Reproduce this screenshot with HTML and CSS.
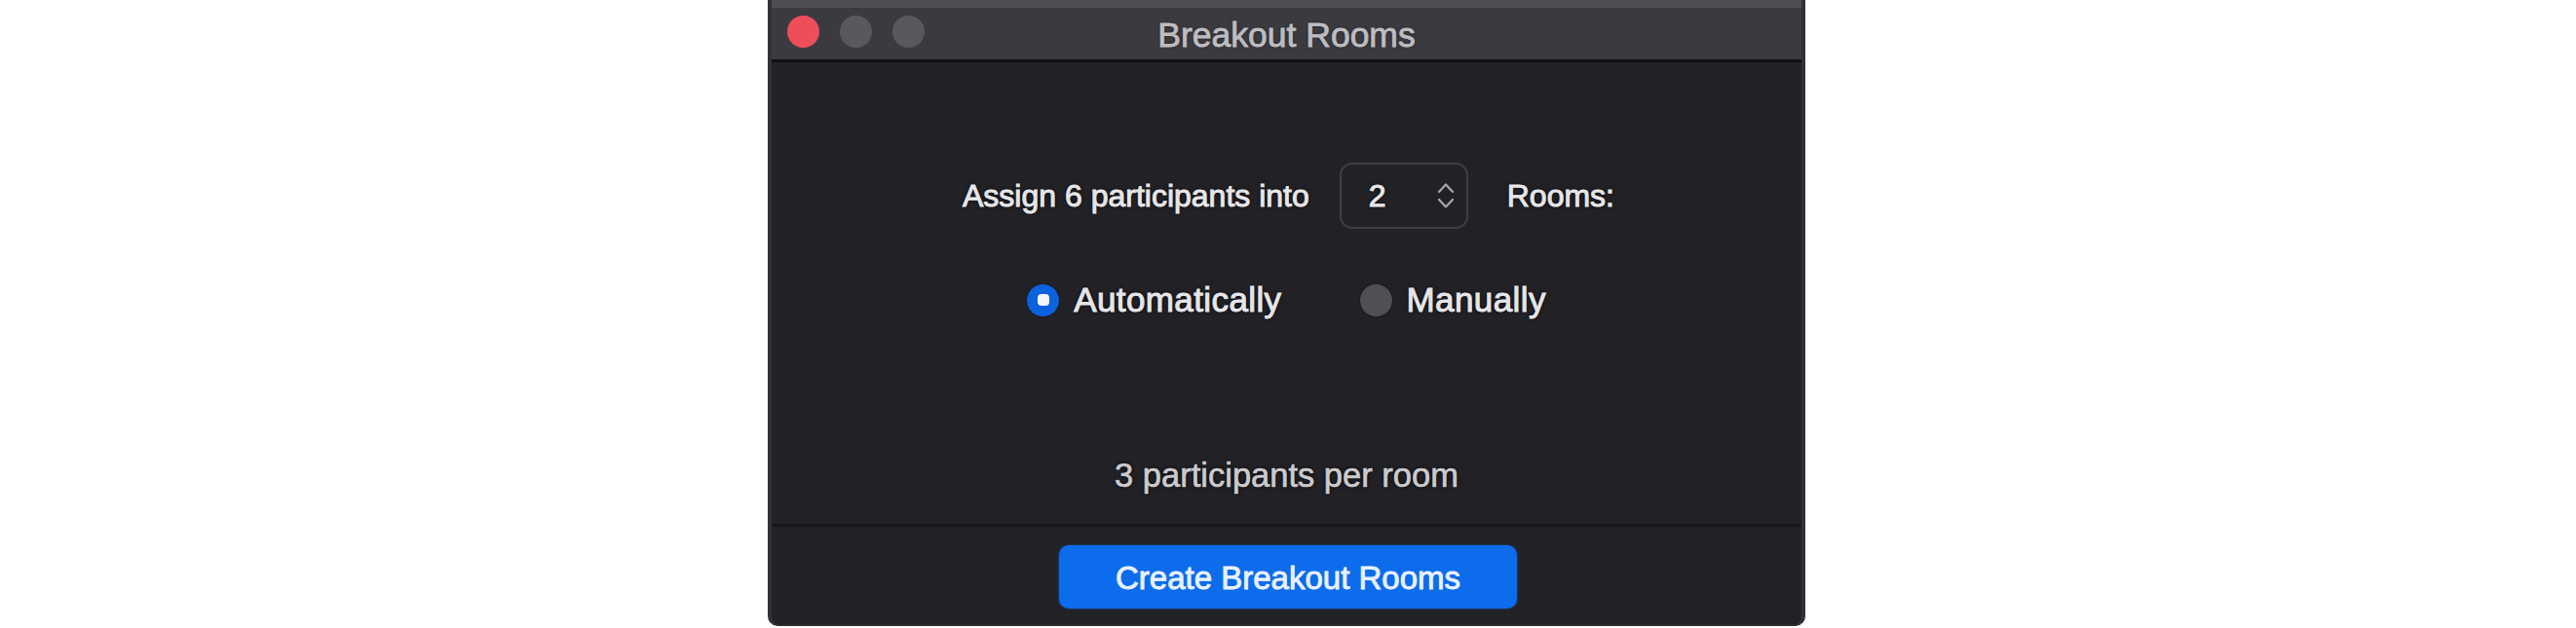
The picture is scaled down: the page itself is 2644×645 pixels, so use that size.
FILE: index.html
```html
<!DOCTYPE html>
<html lang="en">
<head>
<meta charset="utf-8">
<title>Breakout Rooms</title>
<link rel="stylesheet" href="styles.css">
</head>
<body>
<div class="window">
  <div class="titlebar">
    <div class="lights">
      <span class="light red"></span>
      <span class="light"></span>
      <span class="light"></span>
    </div>
    <div class="title">Breakout Rooms</div>
    <div class="spacer"></div>
  </div>
  <div class="content">
    <div class="assign-row">
      <span class="label">Assign 6 participants into</span>
      <div class="spinner">
        <span class="value">2</span>
        <svg class="arrows" width="18" height="32" viewBox="0 0 18 32">
          <path d="M2 12 L9 4.5 L16 12" fill="none" stroke="#a8a8ac" stroke-width="2.2" stroke-linecap="round" stroke-linejoin="round"/>
          <path d="M2 20 L9 27.5 L16 20" fill="none" stroke="#a8a8ac" stroke-width="2.2" stroke-linecap="round" stroke-linejoin="round"/>
        </svg>
      </div>
      <span class="label">Rooms:</span>
    </div>
    <div class="radios">
      <div class="radio"><span class="dot checked"></span><span class="radio-text">Automatically</span></div>
      <div class="radio"><span class="dot"></span><span class="radio-text">Manually</span></div>
    </div>
    <div class="count">3 participants per room</div>
  </div>
  <div class="footer">
    <button class="create">Create Breakout Rooms</button>
  </div>
</div>
</body>
</html>
```

FILE: styles.css
```css
html, body {
  margin: 0;
  padding: 0;
  background: #ffffff;
}

body {
  width: 2644px;
  height: 645px;
  overflow: hidden;
  font-family: "Liberation Sans", Arial, sans-serif;
}

.window {
  width: 1065px;
  height: 643px;
  margin-left: 788px;
  box-sizing: border-box;
  background: #222126;
  border-left: 4px solid #323136;
  border-right: 4px solid #323136;
  border-bottom: 2px solid #2b2a2f;
  border-radius: 0 0 10px 10px;
  overflow: hidden;
  display: flex;
  flex-direction: column;
}

/* title bar */
.titlebar {
  flex: none;
  height: 64px;
  box-sizing: border-box;
  background: #3b3a3f;
  border-top: 8px solid #4e4d52;
  border-bottom: 3px solid #111013;
  display: grid;
  grid-template-columns: 1fr auto 1fr;
  align-items: center;
  padding-bottom: 5px;
}

.lights {
  display: flex;
  gap: 21px;
  padding-left: 16px;
}

.light {
  width: 33px;
  height: 33px;
  border-radius: 50%;
  background: #59585d;
}

.light.red {
  background: #ee4d5a;
}

.title {
  margin-top: 9px;
  font-size: 35.5px;
  line-height: 1;
  color: #bdbdc0;
  -webkit-text-stroke: 0.9px #bdbdc0;
  text-shadow: 0 0 3px rgba(0, 0, 0, 0.6);
}

/* main content */
.content {
  flex: none;
  height: 477px;
  box-sizing: border-box;
  border-bottom: 3px solid #18171b;
  padding-top: 103px;
  display: flex;
  flex-direction: column;
  align-items: center;
  color: #e6e6e8;
  text-shadow: 0 0 2px #000, 0 0 4px rgba(0, 0, 0, 0.7);
}

.assign-row {
  display: flex;
  align-items: center;
  height: 68px;
  font-size: 32px;
  padding-left: 4px;
}

.label {
  -webkit-text-stroke: 1px #e6e6e8;
}

.spinner {
  width: 132px;
  height: 68px;
  box-sizing: border-box;
  margin: 0 40px 0 31px;
  border: 2px solid #3f3e43;
  border-radius: 13px;
  display: flex;
  align-items: center;
  justify-content: space-between;
  padding: 0 12px 0 28px;
}

.value {
  font-size: 32px;
  -webkit-text-stroke: 1px #e6e6e8;
}

.arrows {
  display: block;
}

.radios {
  margin-top: 53px;
  height: 40px;
  line-height: 40px;
  display: flex;
  align-items: center;
  gap: 80px;
  font-size: 35px;
  letter-spacing: 0.4px;
}

.radio {
  display: flex;
  align-items: center;
  gap: 15px;
}

.radio-text {
  -webkit-text-stroke: 1px #e6e6e8;
}

.dot {
  width: 33px;
  height: 33px;
  border-radius: 50%;
  background: #504f54;
  box-sizing: border-box;
  display: flex;
  align-items: center;
  justify-content: center;
  box-shadow: 0 0 2px rgba(0, 0, 0, 0.6);
}

.dot.checked {
  background: #0b62dc;
}

.dot.checked::after {
  content: "";
  width: 12px;
  height: 12px;
  border-radius: 4px;
  background: #f2f6ff;
}

.count {
  margin-top: 140px;
  height: 40px;
  line-height: 40px;
  font-size: 34.5px;
  color: #cbcbce;
  -webkit-text-stroke: 0.7px #cbcbce;
}

/* footer */
.footer {
  flex: 1;
  display: flex;
  justify-content: center;
  align-items: flex-start;
  padding-top: 19px;
  padding-left: 3px;
}

.create {
  width: 470px;
  height: 65px;
  padding: 3px 0 0;
  border: none;
  border-radius: 10px;
  background: #0d6ceb;
  color: #e9f1ff;
  font-family: "Liberation Sans", Arial, sans-serif;
  font-size: 33px;
  -webkit-text-stroke: 0.9px #e9f1ff;
  box-shadow: 0 0 3px rgba(13, 108, 235, 0.6);
}
```
